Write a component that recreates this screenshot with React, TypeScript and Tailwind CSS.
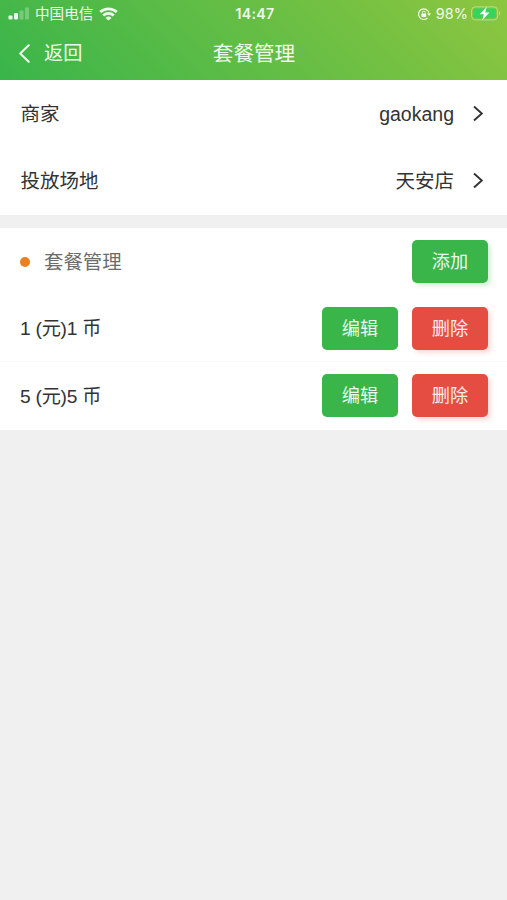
import React from 'react';

interface Plan {
  id: number;
  price: number;
  coins: number;
}

interface CellProps {
  label: string;
  value: string;
}

interface ActionButtonProps {
  label: string;
  className: string;
}

const plans: Plan[] = [
  { id: 1, price: 1, coins: 1 },
  { id: 2, price: 5, coins: 5 }
];

function StatusBar() {
  return (
    <div className="grid h-[27px] grid-cols-[1fr_auto_1fr] items-center pl-2 pr-[5px] text-white/90">
      <div className="flex items-center">
        <svg width="22" height="13" viewBox="0 0 22 13" fill="currentColor">
          <rect x="0.5" y="8.5" width="4" height="4" rx="1" />
          <rect x="6" y="6" width="4" height="6.5" rx="1" />
          <rect x="11.5" y="3.5" width="4" height="9" rx="1" opacity="0.3" />
          <rect x="17" y="0.5" width="4" height="12" rx="1" opacity="0.3" />
        </svg>
        <span className="ml-[5px] text-[14.6px] leading-5">中国电信</span>
        <svg className="ml-[6px]" width="19" height="14" viewBox="0 0 19 14" fill="none" stroke="currentColor" strokeWidth="2.7">
          <path d="M1.2 5.1a12.2 12.2 0 0 1 16.6 0" />
          <path d="M4.2 8.5a7.7 7.7 0 0 1 10.6 0" />
          <path d="M9.5 13.6 6.5 10.9a4.3 4.3 0 0 1 6 0z" fill="currentColor" stroke="none" />
        </svg>
      </div>

      <span className="font-['Inter'] text-[14.2px] font-semibold leading-5 tracking-[0.3px]">14:47</span>

      <div className="flex items-center justify-end">
        {/* Orientation lock */}
        <svg width="14" height="14" viewBox="0 0 14 14" fill="none" stroke="currentColor" strokeWidth="1.2">
          <path d="M10.5 11a5.3 5.3 0 1 1 1.4-5.3" />
          <path d="M10.1 6.2h3.9l-1.9 2.7z" fill="currentColor" stroke="none" />
          <rect x="4.4" y="6.4" width="4.8" height="3.5" rx="0.6" fill="currentColor" stroke="none" />
          <path d="M5.4 6.6V5.5a1.4 1.4 0 0 1 2.8 0v1.1" strokeWidth="0.9" />
        </svg>
        <span className="ml-[5px] font-['Inter'] text-[14.4px] leading-5 tracking-[0.1px]">98%</span>
        <svg className="ml-[3px]" width="31" height="15" viewBox="0 0 31 15">
          <rect x="0.6" y="0.9" width="26" height="13" rx="3.6" fill="none" stroke="#fff" strokeOpacity="0.4" />
          <rect x="2.3" y="2.5" width="22.6" height="9.8" rx="2" fill="#35d45e" />
          <path d="M28 5.2c1.6.6 1.6 3.8 0 4.4z" fill="#fff" fillOpacity="0.4" />
          <path d="M15.8 0.7 8.7 8.2h4.2L11.2 14.3 18.4 6.6h-4.2z" fill="#fff" />
        </svg>
      </div>
    </div>
  );
}

function NavBar() {
  return (
    <div className="grid h-[53px] grid-cols-[1fr_auto_1fr] items-center pl-[18px] pr-[17px] pt-px text-white/90">
      <button className="flex items-center">
        <svg width="12" height="20" viewBox="0 0 12 20" fill="none" stroke="currentColor" strokeWidth="2.1" strokeLinecap="round" strokeLinejoin="round">
          <path d="M10.7 1.3 2.2 9.5l8.5 8.3" />
        </svg>
        <span className="ml-[14px] text-[19.2px]">返回</span>
      </button>
      <h1 className="text-[20.6px]">套餐管理</h1>
    </div>
  );
}

function Cell({ label, value }: CellProps) {
  return (
    <div className="flex h-[67.5px] items-center bg-white pl-[20.5px] pr-[23px] text-[19.5px] text-[#333]">
      <span className="flex-1 pt-px">{label}</span>
      <span className="pt-px">{value}</span>
      <svg className="ml-[18px]" width="12" height="18" viewBox="0 0 12 18" fill="none" stroke="currentColor" strokeWidth="1.9">
        <path d="m2 1.5 7.8 7L2 15.5" />
      </svg>
    </div>
  );
}

function ActionButton({ label, className }: ActionButtonProps) {
  return (
    <button className={`flex h-[43px] w-[76px] items-center justify-center rounded-[5px] pt-[2px] text-[18.2px] text-white/90 ${className}`}>
      {label}
    </button>
  );
}

export default function App() {
  return (
    <div className="min-h-screen w-full bg-[#f0f0f0] font-['Liberation_Sans','Noto_Sans_CJK_SC',sans-serif]">
      <header className="h-20 bg-[linear-gradient(45deg,#39b54a,#8dc63f)]">
        <StatusBar />
        <NavBar />
      </header>

      <section>
        <Cell label="商家" value="gaokang" />
        <Cell label="投放场地" value="天安店" />
      </section>

      <section className="mt-[13px] bg-white">
        <div className="flex h-[67.2px] items-center pl-5 pr-[19px]">
          <span className="h-[10px] w-[10px] rounded-full bg-[#ea8020]" />
          <span className="ml-[14px] flex-1 pt-[2px] text-[19.4px] text-[#6c6c6c]">套餐管理</span>
          <ActionButton label="添加" className="bg-[#39b54a] shadow-[3px_3px_4px_rgba(57,181,74,0.2)]" />
        </div>

        {plans.map((plan) => (
          <div
            key={plan.id}
            className="flex h-[67.2px] items-center border-b border-[#fafafa] pl-5 pr-[19px] last:border-b-0"
          >
            <span className="flex-1 pt-[2px] text-[19.2px] tracking-[-0.25px] text-[#333]">
              {plan.price} (元){plan.coins} 币
            </span>
            <div className="flex gap-[14px]">
              <ActionButton label="编辑" className="bg-[#39b54a]" />
              <ActionButton label="删除" className="bg-[#e54d42] shadow-[3px_3px_4px_rgba(229,77,66,0.2)]" />
            </div>
          </div>
        ))}
      </section>
    </div>
  );
}
